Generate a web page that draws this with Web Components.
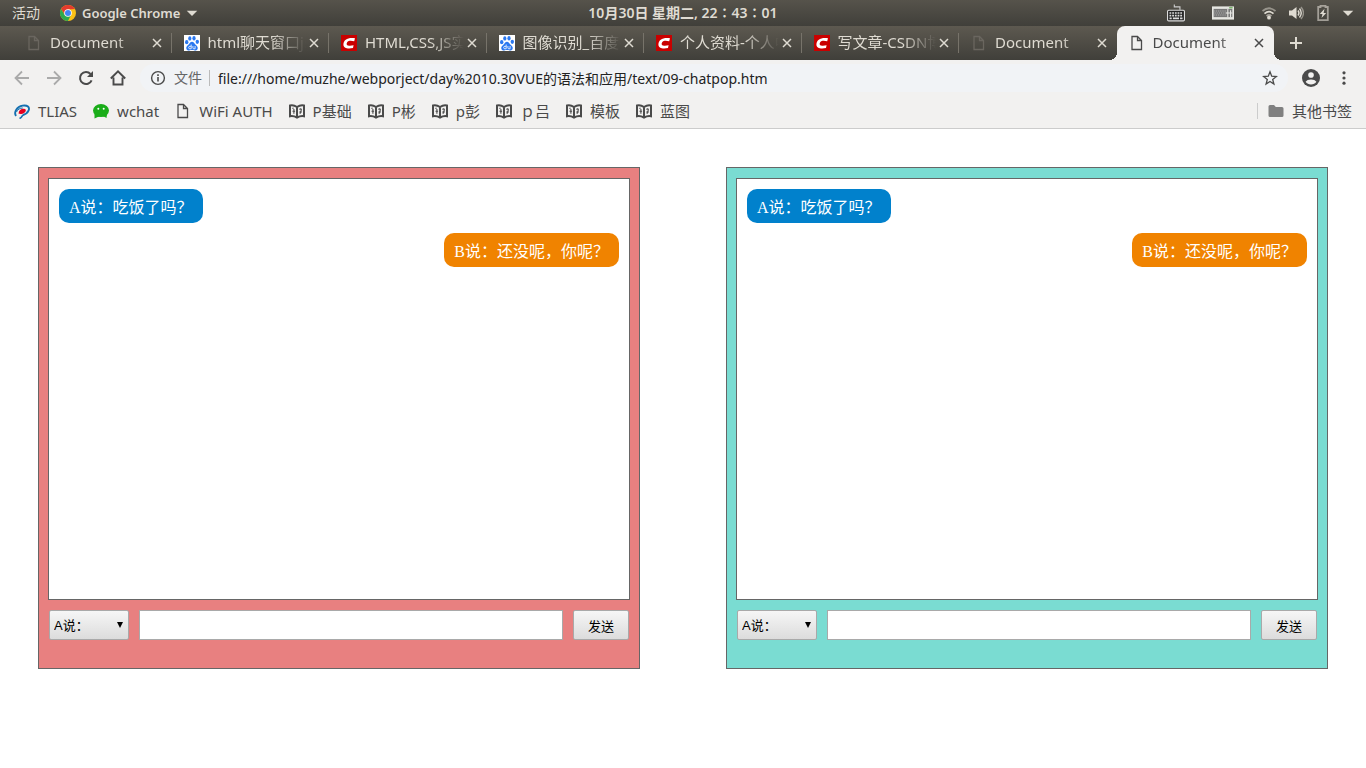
<!DOCTYPE html>
<html lang="zh-CN">
<head>
<meta charset="utf-8">
<title>Document</title>
<style>
    body {
        margin: 0;
        background: #fff;
        font-family: "Noto Sans", "Noto Sans CJK SC", sans-serif;
    }
</style>
</head>
<body>
<desktop-bar></desktop-bar>
<tab-strip>
    <browser-tab icon="page-dim">Document</browser-tab>
    <browser-tab icon="baidu">html聊天窗口js实现</browser-tab>
    <browser-tab icon="csdn">HTML,CSS,JS实现聊天</browser-tab>
    <browser-tab icon="baidu">图像识别_百度搜索</browser-tab>
    <browser-tab icon="csdn">个人资料-个人中心</browser-tab>
    <browser-tab icon="csdn">写文章-CSDN博客</browser-tab>
    <browser-tab icon="page-dim">Document</browser-tab>
    <browser-tab icon="page" active>Document</browser-tab>
</tab-strip>
<nav-bar url="file:///home/muzhe/webporject/day%2010.30VUE的语法和应用/text/09-chatpop.htm"></nav-bar>
<bookmark-bar>
    <bookmark-item icon="tlias">TLIAS</bookmark-item>
    <bookmark-item icon="wechat">wchat</bookmark-item>
    <bookmark-item icon="page">WiFi AUTH</bookmark-item>
    <bookmark-item icon="book">P基础</bookmark-item>
    <bookmark-item icon="book">P彬</bookmark-item>
    <bookmark-item icon="book">p彭</bookmark-item>
    <bookmark-item icon="book">ｐ吕</bookmark-item>
    <bookmark-item icon="book">模板</bookmark-item>
    <bookmark-item icon="book">蓝图</bookmark-item>
    <bookmark-item icon="folder" slot="other">其他书签</bookmark-item>
</bookmark-bar>
<chat-room>
    <chat-window color="#e88080">
        <chat-bubble who="A">A说：吃饭了吗？</chat-bubble>
        <chat-bubble who="B">B说：还没呢，你呢？</chat-bubble>
    </chat-window>
    <chat-window color="#7adcd2">
        <chat-bubble who="A">A说：吃饭了吗？</chat-bubble>
        <chat-bubble who="B">B说：还没呢，你呢？</chat-bubble>
    </chat-window>
</chat-room>

<script>
const PAGE = '<path d="M3 1.5h5.500l4 4v9H3z M8.500 1.500v4h4" fill="none" stroke="currentColor" stroke-width="1.3"/>';

// every icon is drawn on a 16x16 grid
const ICONS = {
    'page': PAGE,
    'page-dim': PAGE,
    'baidu': `<path fill="#fff" d="M0 0h16v16H0z"/>
        <g fill="#2a78f0">
            <ellipse cx="2.7" cy="7.2" rx="1.7" ry="2.1"/>
            <ellipse cx="5.8" cy="3.4" rx="1.6" ry="2.2"/>
            <ellipse cx="10" cy="3.3" rx="1.6" ry="2.2"/>
            <ellipse cx="13.3" cy="6.8" rx="1.7" ry="2.1"/>
            <path d="M8 6.8c-1.8 0-2.3 1.7-3.6 2.9-1.3 1.2-2.4 2-2.1 3.7.3 1.6 1.6 2.1 2.9 2 1.2-.1 1.7-.3 2.8-.3s1.6.2 2.8.3c1.3.1 2.6-.4 2.9-2 .3-1.7-.8-2.5-2.1-3.7-1.3-1.2-1.8-2.9-3.6-2.9z"/>
        </g>
        <path d="M7.2 9.500v4.300H5.900a1.100 1.100 0 0 1 0-2.500h1.300M8.900 11v1.900q0 .9.900.9h1.300V11" fill="none" stroke="#fff" stroke-width=".8"/>`,
    'csdn': `<path fill="#c90000" d="M0 0h16v16H0z"/>
        <path d="M14 3.200l-.8 3C10 5.400 7.400 5.500 6.300 7c-1.400 2.300-.6 3.600 2 3.700q2 .1 4.300-.4l-.6 2.700c-5.300 1-9.600.2-9.600-3.600C2.600 4.500 7 2.200 14 3.200z" fill="#fff"/>`,
    'close': '<path d="M4 4l8 8M12 4l-8 8" stroke="currentColor" stroke-width="1.5"/>',
    'plus': '<path d="M8 2v12M2 8h12" stroke="currentColor" stroke-width="2"/>',
    'back': '<path d="M15 8H2M8 1.500L1.500 8 8 14.500" fill="none" stroke="currentColor" stroke-width="1.8"/>',
    'forward': '<path d="M1 8h13M8 1.500L14.500 8 8 14.500" fill="none" stroke="currentColor" stroke-width="1.8"/>',
    'reload': '<path d="M13.600 10.300A6 6 0 1 1 12.500 4" fill="none" stroke="currentColor" stroke-width="2"/><path d="M15 1v6H9z" fill="currentColor"/>',
    'home': '<path d="M3.500 7.500v7h9v-7M.8 8.500L8 1.400l7.200 7.100" fill="none" stroke="currentColor" stroke-width="1.9"/>',
    'info': '<circle cx="8" cy="8" r="6.4" fill="none" stroke="currentColor" stroke-width="1.4"/><path d="M8 7v4.500M8 4.300v1.600" stroke="currentColor" stroke-width="1.6"/>',
    'star': '<path d="M8 1.800l1.700 4.400 4.700.3-3.700 3 1.200 4.600L8 11.500l-3.900 2.600 1.200-4.600-3.700-3 4.700-.3z" fill="none" stroke="currentColor" stroke-width="1.3"/>',
    'account': `<mask id="m"><path fill="#fff" d="M0 0h16v16H0z"/><circle cx="8" cy="5.300" r="2.5"/><path d="M3.200 11.400c1.400-2.900 8.200-2.900 9.600 0-2.200 3.200-7.400 3.200-9.600 0z"/></mask>
        <circle cx="8" cy="8" r="8" fill="currentColor" mask="url(#m)"/>`,
    'dots': '<g fill="currentColor"><circle cx="8" cy="2.800" r="1.6"/><circle cx="8" cy="8" r="1.6"/><circle cx="8" cy="13.200" r="1.6"/></g>',
    'tlias': `<path d="M2 13C-.5 9 3 3.500 8.500 2.600c5-.8 7.600 1.600 6 5.100-1 2.300-3 3.600-5.500 4.300" fill="none" stroke="#1470b0" stroke-width="1.9"/>
        <path d="M2.500 9c1-2.500 3.500-4 6.300-4" fill="none" stroke="#1470b0"/>
        <path d="M4.500 10.500C4.700 7.500 7 5.500 10 5.700c2.400.2 2.300 2.300.6 3.700-1.300 1-3 1.500-4.100 1.600z" fill="#e60020"/>
        <path d="M5.500 15.500c1.600-.6 2.600-2 3.500-3.600" fill="none" stroke="#1470b0" stroke-width="1.6"/>`,
    'wechat': `<ellipse cx="8" cy="7.600" rx="8" ry="6.5" fill="#1aad19"/><path d="M1.500 11v4.500L7 13zM10 13l3.500 2 .5-4z" fill="#1aad19"/>
        <circle cx="5.300" cy="5.700" r="1" fill="#fff"/><circle cx="10.700" cy="5.700" r="1" fill="#fff"/>`,
    'book': `<path d="M8 4Q4.500 1.600 1 2.500v10.700q3.500-.6 7 1.300 3.500-1.900 7-1.300V2.500Q11.500 1.600 8 4v10" fill="none" stroke="currentColor" stroke-width="2"/>
        <path d="M3.400 5.600l1.200-.6M4.900 6v4.700M3.500 8.200h2.600M10.500 6.500c1.600-1.600 2.500 0 1.300 1.700l-.8 2.600M10.300 9h2.600" fill="none" stroke="currentColor" stroke-width="1.1"/>`,
    'folder': '<path d="M.5 3.500q0-1.500 1.500-1.500h4l1.800 2H14q1.500 0 1.500 1.500v7q0 1.500-1.500 1.500H2q-1.500 0-1.500-1.500z" fill="currentColor"/>',
    'chrome': `<circle cx="8" cy="8" r="8" fill="#fbc116"/>
        <path d="M1.070 4A8 8 0 0 1 14.930 4L8 4.400 4.880 9.800z" fill="#e33b2e"/>
        <path d="M1.070 4A8 8 0 0 0 8 16l3.120-6.200H4.600z" fill="#2da94f"/>
        <circle cx="8" cy="8" r="3.8" fill="#fff"/><circle cx="8" cy="8" r="3" fill="#4285f4"/>`,
    'caret': '<path d="M1 5h14l-7 7z" fill="currentColor"/>',
    'keyboard': `<path d="M6.500 .5v2h5V5" fill="none" stroke="#ccc"/>
        <rect x=".5" y="5.500" width="15" height="9.500" rx="1" fill="#222" stroke="#ddd"/>
        <path d="M2.200 8h11.600M2.200 10.300h11.600" stroke="#ddd" stroke-width="1.5" stroke-dasharray="1.600 .8"/><path d="M2.200 12.800h2M5.200 12.800h5.500M11.600 12.800h2.200" stroke="#ddd" stroke-width="1.5"/>`,
    'layout': `<rect x="0" y="3.200" width="16" height="9.600" fill="#e6e6e2"/><path d="M1.200 5h13.600v6H1.200z" fill="#777"/>
        <path d="M1.200 6.500h9M1.800 8h9M1.200 9.500h9" stroke="#aaa" stroke-width=".8" stroke-dasharray=".8 .8"/><path d="M11.500 5v6M13.500 6v5M10 8h4.800" stroke="#e6e6e2" stroke-width=".8"/><path d="M12.500 4.200h2.500" stroke="#5aa94a" stroke-width=".8"/>`,
    'wifi': `<g fill="none" stroke="currentColor" stroke-width="1.7"><path d="M1.500 6Q8 .5 14.500 6" opacity=".5"/><path d="M3.500 8.600Q8 4.800 12.500 8.600"/><path d="M5.500 11Q8 9 10.500 11" opacity=".6"/></g><circle cx="8" cy="12.700" r="1.9" fill="currentColor"/>`,
    'volume': `<path d="M1 5.500h3L8.500 2v12L4 10.500H1z" fill="currentColor"/><g fill="none" stroke="currentColor" stroke-width="1.4"><path d="M10 5.500q2 2.500 0 5"/><path d="M11.500 3.500q3.500 4.500 0 9"/><path d="M13 2q5 6 0 12" opacity=".5"/></g>`,
    'battery': `<path d="M5.500 2V.8h5V2h2.300v13.200H3.200V2z" fill="none" stroke="currentColor" stroke-width="1.8" opacity=".6"/><path d="M9.500 3.800L4.800 9h2.700l-1 4L11.200 8H8.600z" fill="currentColor"/>`,
};

class UiIcon extends HTMLElement {
    connectedCallback() {
        if (!this.shadowRoot) this.attachShadow({ mode: 'open' });
        this.shadowRoot.innerHTML = `
            <style>
                :host { display: block; flex: none; width: 16px; height: 16px; }
                svg { display: block; width: 100%; height: 100%; }
            </style>
            <svg viewBox="0 0 16 16" aria-hidden="true">${ICONS[this.getAttribute('name')]}</svg>
        `;
    }
}
customElements.define('ui-icon', UiIcon);

class DesktopBar extends HTMLElement {
    constructor() {
        super();
        this.attachShadow({ mode: 'open' });
        this.shadowRoot.innerHTML = `
            <style>
                :host {
                    display: grid;
                    grid-template-columns: 1fr auto 1fr;
                    align-items: center;
                    height: 26px;
                    padding: 0 12px;
                    background: linear-gradient(#56534b, #403f3a);
                    color: #dfdbd2;
                    font-size: 13px;
                    line-height: 26px;
                    font-weight: 600;
                    white-space: nowrap;
                }
                div, button { display: flex; align-items: center; }
                button {
                    border: 0;
                    padding: 0;
                    background: none;
                    color: inherit;
                    font: inherit;
                }
                time { font-size: 14px; }
                .left { gap: 20px; }
                .activities { font-weight: 400; font-size: 14px; }
                .app { gap: 6px; }
                .status { justify-content: flex-end; gap: 11px; }
                .wide { width: 22px; height: 22px; margin-right: 16px; }
                .keys { width: 18px; height: 18px; margin-right: 16px; }
                .small { width: 12px; height: 12px; }
            </style>
            <div class="left">
                <button class="activities">活动</button>
                <button class="app"><ui-icon name="chrome"></ui-icon>Google Chrome<ui-icon class="small" name="caret"></ui-icon></button>
            </div>
            <time>10月30日 星期二, 22∶43∶01</time>
            <div class="status">
                <ui-icon class="keys" name="keyboard"></ui-icon>
                <ui-icon class="wide" name="layout"></ui-icon>
                <ui-icon name="wifi"></ui-icon>
                <ui-icon name="volume"></ui-icon>
                <ui-icon name="battery"></ui-icon>
                <ui-icon class="small" name="caret"></ui-icon>
            </div>
        `;
    }
}
customElements.define('desktop-bar', DesktopBar);

class TabStrip extends HTMLElement {
    constructor() {
        super();
        this.attachShadow({ mode: 'open' });
        this.shadowRoot.innerHTML = `
            <style>
                :host {
                    display: flex;
                    height: 34px;
                    padding: 0 62px 0 14px;
                    background: linear-gradient(#5d5950, #403f3a);
                }
                nav { display: flex; flex: 1; min-width: 0; }
                button {
                    width: 30px;
                    border: 0;
                    padding: 0 0 0 14px;
                    background: none;
                    color: #dfdbd2;
                }
            </style>
            <nav><slot></slot></nav>
            <button aria-label="新标签页"><ui-icon name="plus"></ui-icon></button>
        `;
    }
}
customElements.define('tab-strip', TabStrip);

class BrowserTab extends HTMLElement {
    connectedCallback() {
        if (this.shadowRoot) return;
        this.attachShadow({ mode: 'open' });
        const icon = this.getAttribute('icon');
        this.shadowRoot.innerHTML = `
            <style>
                :host {
                    display: flex;
                    flex: 1;
                    align-items: center;
                    min-width: 0;
                    box-sizing: border-box;
                    padding: 0 7px 0 12px;
                    color: #dfdbd2;
                    background: linear-gradient(#77736a, #77736a) right 7px / 1px 20px no-repeat;
                }
                :host(:nth-last-child(2)) { background: none; }
                :host([active]) {
                    border-radius: 8px 8px 0 0;
                    background: #f2f1f0;
                    color: #4a4a4a;
                    position: relative;
                }
                /* curved feet of the active tab */
                :host([active])::before, :host([active])::after {
                    content: "";
                    position: absolute;
                    bottom: 0;
                    width: 8px;
                    height: 8px;
                }
                :host([active])::before {
                    right: 100%;
                    background: radial-gradient(circle at 0 0, transparent 8px, #f2f1f0 8px);
                }
                :host([active])::after {
                    left: 100%;
                    background: radial-gradient(circle at 100% 0, transparent 8px, #f2f1f0 8px);
                }
                button {
                    display: flex;
                    align-items: center;
                    border: 0;
                    padding: 0;
                    background: none;
                    color: inherit;
                    font: inherit;
                    font-size: 15px;
                    line-height: 20px;
                }
                .title { flex: 1; min-width: 0; gap: 8px; text-align: left; }
                .title span {
                    flex: 1;
                    padding-bottom: 2px;
                    overflow: hidden;
                    white-space: nowrap;
                    -webkit-mask: linear-gradient(90deg, #000 65%, transparent);
                }
                .dim { color: #6a665f; }
            </style>
            <button class="title"><ui-icon class="${icon === 'page-dim' ? 'dim' : ''}" name="${icon}"></ui-icon><span><slot></slot></span></button>
            <button aria-label="关闭"><ui-icon name="close"></ui-icon></button>
        `;
    }
}
customElements.define('browser-tab', BrowserTab);

class NavBar extends HTMLElement {
    connectedCallback() {
        if (this.shadowRoot) return;
        this.attachShadow({ mode: 'open' });
        this.shadowRoot.innerHTML = `
            <style>
                :host {
                    display: flex;
                    align-items: center;
                    gap: 14px;
                    height: 36px;
                    padding: 0 14px;
                    background: #f2f1f0;
                    color: #4a4a4a;
                    font-size: 14px;
                }
                .buttons { display: flex; gap: 16px; }
                button { border: 0; padding: 0; background: none; color: inherit; }
                button:disabled { color: #aaa; }
                .address {
                    display: flex;
                    flex: 1;
                    align-items: center;
                    gap: 8px;
                    height: 28px;
                    padding: 0 10px;
                    border-radius: 14px;
                    background: #f1f3f6;
                }
                label { padding-right: 7px; border-right: 1px solid #bbb; line-height: 16px; color: #666; }
                input {
                    flex: 1;
                    min-width: 0;
                    border: 0;
                    padding: 0;
                    background: none;
                    color: #222;
                    font: inherit;
                    outline: 0;
                }
                .account { width: 18px; height: 18px; }
            </style>
            <div class="buttons">
                <button disabled aria-label="后退"><ui-icon name="back"></ui-icon></button>
                <button disabled aria-label="前进"><ui-icon name="forward"></ui-icon></button>
                <button aria-label="重新加载"><ui-icon name="reload"></ui-icon></button>
                <button aria-label="主页"><ui-icon name="home"></ui-icon></button>
            </div>
            <div class="address">
                <ui-icon name="info"></ui-icon>
                <label for="url">文件</label>
                <input id="url" type="text" spellcheck="false" value="${this.getAttribute('url')}">
                <button aria-label="收藏"><ui-icon name="star"></ui-icon></button>
            </div>
            <div class="buttons">
                <button aria-label="用户"><ui-icon class="account" name="account"></ui-icon></button>
                <button aria-label="菜单"><ui-icon name="dots"></ui-icon></button>
            </div>
        `;
    }
}
customElements.define('nav-bar', NavBar);

class BookmarkBar extends HTMLElement {
    constructor() {
        super();
        this.attachShadow({ mode: 'open' });
        this.shadowRoot.innerHTML = `
            <style>
                :host {
                    display: flex;
                    align-items: center;
                    justify-content: space-between;
                    height: 29px;
                    padding: 0 14px 3px;
                    border-bottom: 1px solid #ccc;
                    background: #f2f1f0;
                }
                nav { display: flex; gap: 16px; }
                .other { padding-left: 10px; border-left: 1px solid #ccc; }
            </style>
            <nav><slot></slot></nav>
            <div class="other"><slot name="other"></slot></div>
        `;
    }
}
customElements.define('bookmark-bar', BookmarkBar);

class BookmarkItem extends HTMLElement {
    connectedCallback() {
        if (this.shadowRoot) return;
        this.attachShadow({ mode: 'open' });
        this.shadowRoot.innerHTML = `
            <style>
                :host { display: block; color: #4a4a4a; }
                a {
                    display: flex;
                    align-items: center;
                    gap: 8px;
                    color: inherit;
                    font-size: 15px;
                    line-height: 16px;
                    text-decoration: none;
                    white-space: nowrap;
                }
                .folder { color: #808080; }
            </style>
            <a href="#"><ui-icon class="${this.getAttribute('icon')}" name="${this.getAttribute('icon')}"></ui-icon><slot></slot></a>
        `;
    }
}
customElements.define('bookmark-item', BookmarkItem);

class ChatBubble extends HTMLElement {
    constructor() {
        super();
        this.attachShadow({ mode: 'open' });
        this.shadowRoot.innerHTML = `
            <style>
                :host {
                    display: block;
                    align-self: flex-start;
                    padding: 7px 10px 3px;
                    border-radius: 10px;
                    background: #0181cc;
                    color: #fff;
                    line-height: 24px;
                }
                :host([who="B"]) {
                    align-self: flex-end;
                    background: #f08300;
                }
            </style>
            <slot></slot>
        `;
    }
}
customElements.define('chat-bubble', ChatBubble);

class ChatWindow extends HTMLElement {
    connectedCallback() {
        if (this.shadowRoot) return;
        this.attachShadow({ mode: 'open' });
        this.shadowRoot.innerHTML = `
            <style>
                :host {
                    display: block;
                    border: 1px solid #666;
                    padding: 10px 9px 28px;
                    background: ${this.getAttribute('color')};
                    font-family: "Liberation Serif", "Noto Sans CJK SC", serif;
                    font-size: 16px;
                }
                .log {
                    display: flex;
                    flex-direction: column;
                    gap: 10px;
                    min-height: 400px;
                    padding: 10px;
                    border: 1px solid #666;
                    background: #fff;
                }
                form { display: flex; gap: 10px; margin: 10px 1px 0; }
                select, input, button {
                    box-sizing: border-box;
                    height: 30px;
                    margin: 0;
                    border: 1px solid #a9a9a9;
                    border-radius: 0;
                    color: #000;
                    font: 13px "Liberation Sans", "Noto Sans CJK SC", sans-serif;
                }
                select, button {
                    border-radius: 2px;
                    background: linear-gradient(#f6f6f6, #dcdcdc);
                }
                .speaker { display: grid; width: 80px; align-items: center; }
                .speaker > * { grid-area: 1 / 1; }
                select { width: 100%; padding: 0 4px; appearance: none; }
                .speaker svg { justify-self: end; margin-right: 5px; pointer-events: none; }
                input { flex: 1; min-width: 0; padding: 1px 4px; background: #fff; }
                button { width: 56px; padding: 0; }
            </style>
            <div class="log"><slot></slot></div>
            <form>
                <div class="speaker">
                    <select aria-label="说话人">
                        <option value="A">A说：</option>
                        <option value="B">B说：</option>
                    </select>
                    <svg width="8" height="8" viewBox="0 0 8 8"><path d="M1 1h6L4 7z"/></svg>
                </div>
                <input type="text" aria-label="内容">
                <button>发送</button>
            </form>
        `;

        const root = this.shadowRoot;
        root.querySelector('form').addEventListener('submit', (e) => {
            e.preventDefault();
            const input = root.querySelector('input');
            if (!input.value) return;
            this.dispatchEvent(new CustomEvent('say', {
                bubbles: true,
                detail: { who: root.querySelector('select').value, text: input.value },
            }));
            input.value = '';
        });
    }
}
customElements.define('chat-window', ChatWindow);

class ChatRoom extends HTMLElement {
    constructor() {
        super();
        this.attachShadow({ mode: 'open' });
        this.shadowRoot.innerHTML = `
            <style>
                :host {
                    display: grid;
                    grid-template-columns: 1fr 1fr;
                    gap: 86px;
                    padding: 38px;
                }
            </style>
            <slot></slot>
        `;
        // a message shows up in both windows
        this.addEventListener('say', (e) => {
            for (const win of this.querySelectorAll('chat-window')) {
                const bubble = document.createElement('chat-bubble');
                bubble.setAttribute('who', e.detail.who);
                bubble.textContent = `${e.detail.who}说：${e.detail.text}`;
                win.append(bubble);
            }
        });
    }
}
customElements.define('chat-room', ChatRoom);
</script>
</body>
</html>
